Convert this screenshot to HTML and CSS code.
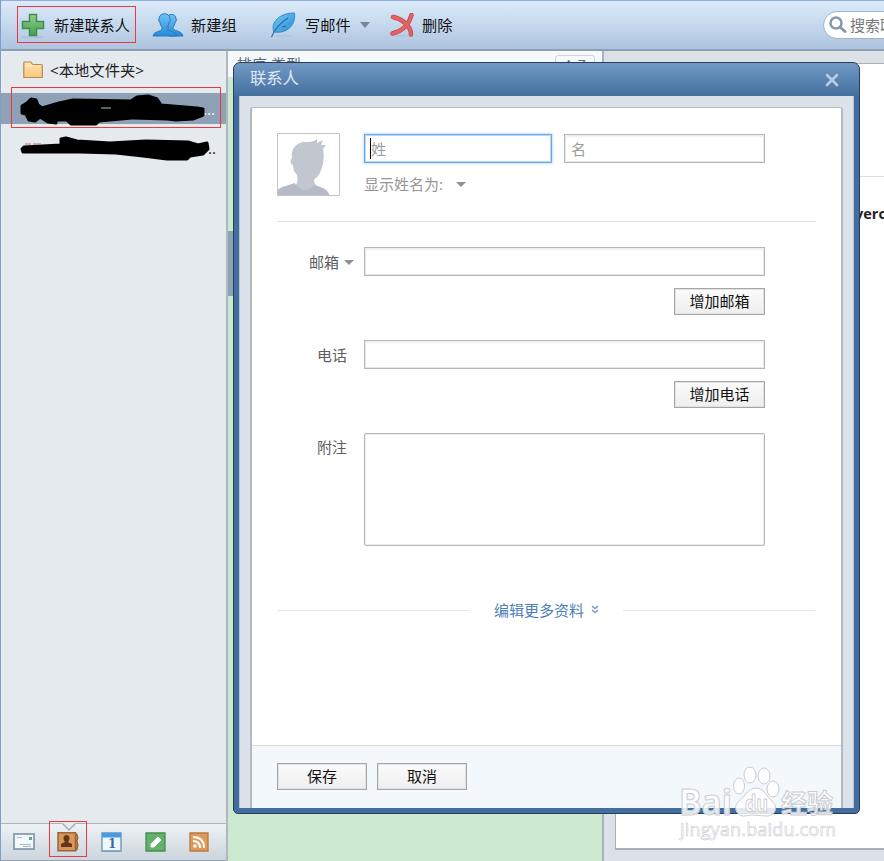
FILE: index.html
```html
<!DOCTYPE html>
<html lang="zh-CN">
<head>
    <meta charset="UTF-8">
    <title>联系人</title>
    <link rel="stylesheet" href="styles.css">
</head>
<body>
    <div class="app">
        <header class="toolbar">
            <div class="tool tool-new">
                <svg class="tool-icon" width="24" height="25" viewBox="0 0 24 25">
                    <defs>
                        <linearGradient id="plus" x1="0" y1="0" x2="0" y2="1"><stop offset="0" stop-color="#8fd08c"/><stop offset="1" stop-color="#43a04c"/></linearGradient>
                    </defs>
                    <path d="M1 24h21" stroke="#9db8d2"/>
                    <path d="M8.500 1.500h7v7h7v7h-7v7h-7v-7h-7v-7h7z" fill="url(#plus)" stroke="#438c4b" stroke-width="1.500"/>
                </svg>
                <span>新建联系人</span>
            </div>
            <div class="tool tool-group">
                <svg class="tool-icon" width="32" height="24" viewBox="0 0 32 24">
                    <defs>
                        <linearGradient id="people" x1="0" y1="0" x2="0" y2="1"><stop offset="0" stop-color="#70c2f2"/><stop offset="1" stop-color="#228ddb"/></linearGradient>
                    </defs>
                    <path d="M15 5c1-5 9-5 9 1 1 1 0 3-1 3 0 2-1 4-2 5v2c2 2 9 2 10 7h-14z" fill="url(#people)" stroke="#2b79b9"/>
                    <path d="M7 6c0-7 11-7 11 0 1 1 0 3-1 3 0 3-2 4-2 5v2c2 3 9 2 10 7H1c1-5 8-4 9-7v-2c-1-1-2-2-2-5-1 0-2-2-1-3z" fill="url(#people)" stroke="#2b79b9"/>
                </svg>
                <span>新建组</span>
            </div>
            <div class="tool tool-mail">
                <svg class="tool-icon" width="26" height="26" viewBox="0 0 26 26">
                    <defs>
                        <linearGradient id="feather" x1="0" y1="0" x2="1" y2="1"><stop offset="0" stop-color="#78cbf5"/><stop offset="1" stop-color="#248bd3"/></linearGradient>
                    </defs>
                    <path d="M6 24h16" stroke="#a8bdd2"/>
                    <path d="M4 20C0 11 9 1 24.500 1 26 13 17 22 4 20z" fill="url(#feather)" stroke="#328cc8"/>
                    <path d="M1.500 25C4 18 11 10 18 6M16 14l-4 1" fill="none" stroke="#28679d" stroke-width="1.100"/>
                </svg>
                <span>写邮件</span>
                <i class="arrow arrow-tool"></i>
            </div>
            <div class="tool tool-delete">
                <svg class="tool-icon" width="24" height="24" viewBox="0 0 24 24">
                    <path d="M5 23h17" stroke="#a8bdd2"/>
                    <path d="M3 4C10 5 21 12 21 21.500M21.500 2C19 11 13 18 2.500 20.500" fill="none" stroke="#b94a50" stroke-width="4.500" stroke-linecap="round"/>
                    <path d="M3 4C10 5 21 12 21 21.500M21.500 2C19 11 13 18 2.500 20.500" fill="none" stroke="#ea625d" stroke-width="3" stroke-linecap="round"/>
                </svg>
                <span>删除</span>
            </div>
            <div class="search">
                <svg width="18" height="18" viewBox="0 0 18 18">
                    <circle cx="7" cy="7" r="5.500" fill="none" stroke="#8499a9" stroke-width="2.500"/>
                    <path d="M11.500 11.500l4.500 4" stroke="#8499a9" stroke-width="3" stroke-linecap="round"/>
                </svg>
                <span>搜索联系人</span>
            </div>
        </header>

        <main class="content">
            <aside class="sidebar">
                <div class="folders">
                    <div class="folder">
                        <svg width="20" height="18" viewBox="0 0 20 18">
                            <defs>
                                <linearGradient id="folder" x1="0" y1="0" x2="0" y2="1"><stop offset="0" stop-color="#ffe3b0"/><stop offset="1" stop-color="#fbc77d"/></linearGradient>
                            </defs>
                            <path d="M.8 16.500V2q0-1 1-1h6l2 2.500h8.500q1 0 1 1v12z" fill="url(#folder)" stroke="#b58a50" stroke-width="1.200"/>
                            <path d="M2 5h7l1.500-1" fill="none" stroke="#fff0cf"/>
                        </svg>
                        <span>&lt;本地文件夹&gt;</span>
                    </div>
                    <div class="folder selected"><span>...</span></div>
                    <div class="folder account"><span>..</span></div>
                </div>
                <nav class="modules">
                    <svg width="22" height="20" viewBox="0 0 22 20">
                        <path d="M1 2h20v15H1z" fill="#f4f8fa" stroke="#728ba2" stroke-width="1.500"/>
                        <path d="M4 5.500h5M7 12.500h11M10 14.500h8" stroke="#a5bac9"/>
                        <path d="M16 5h3v3h-3z" fill="#5aae88"/>
                    </svg>
                    <svg width="22" height="20" viewBox="0 0 22 20">
                        <path d="M18 2h2l1 4-1 3 1 4-1 5h-2z" fill="#bd7845" stroke="#94592f"/>
                        <path d="M1 .8h17.500v18H1z" fill="#d99757" stroke="#9b6538" stroke-width="1.500"/>
                        <path d="M6.500 6c0-4 6-4 6 0 0 2-1 3-1.500 4l4 2v3H4v-3l4-2c-.5-1-1.500-2-1.500-4z" fill="#66351d"/>
                    </svg>
                    <svg width="22" height="20" viewBox="0 0 22 20">
                        <path d="M1 1h19v18H1z" fill="#eff8ff" stroke="#6591b7" stroke-width="1.300"/>
                        <path d="M1 1h19v4.500H1z" fill="#489ae8"/>
                        <text class="day" x="7" y="16">1</text>
                    </svg>
                    <svg width="22" height="20" viewBox="0 0 22 20">
                        <path d="M1 1h19v18H1z" fill="#63b16a" stroke="#498c51" stroke-width="1.300"/>
                        <path d="M6 15v-3l7-7 3 3-7 7z" fill="#fff" stroke="#fff" stroke-linejoin="round"/>
                    </svg>
                    <svg width="22" height="20" viewBox="0 0 22 20">
                        <path d="M1 1h18v18H1z" fill="#e29a5a" stroke="#b9793f" stroke-width="1.300"/>
                        <circle cx="6" cy="14" r="1.800" fill="#fff"/>
                        <path d="M4 9q7 0 7 7M4 5q11 0 11 11" fill="none" stroke="#fff" stroke-width="2"/>
                    </svg>
                    <svg class="notch" width="14" height="9" viewBox="0 0 14 9">
                        <path d="M0 0h14L7 7z" fill="#e5ebef"/>
                        <path d="M.5.5L7 7 13.500.5" fill="none" stroke="#a6b0b9" stroke-width="1.500"/>
                    </svg>
                </nav>
            </aside>
            <section class="list">
                <div class="list-header"><span>排序 类型 &nbsp;▴</span><span class="az">A-Z</span></div>
                <div class="list-selected"></div>
            </section>
            <section class="detail">
                <div class="card">
                    <div class="card-head"></div>
                    <div class="card-name">verc</div>
                </div>
            </section>
        </main>

        <div class="dialog">
            <div class="dialog-title">
                <span>联系人</span>
                <svg width="16" height="16" viewBox="0 0 16 16"><path d="M3 3l10 10M13 3L3 13" stroke="#b9cde4" stroke-width="2.600" stroke-linecap="round"/></svg>
            </div>
            <div class="dialog-body">
                <div class="panel">
                    <form class="form">
                        <div class="person">
                            <svg class="avatar" width="63" height="63" viewBox="0 0 63 63">
                                <path d="M17 53c4-2 4-5 3-11-3-3-4-6-4-10-3-1-3-5-1-7-2-9 5-16 13-16 5 0 8 0 12-3l0 4 6-3-2 5 5 0-3 4c2 9 0 20-5 27-2 3-4 2-4 5 0 2 2 4 3 5-5 10-16 9-23 0z" fill="#c2c6cf"/>
                                <path d="M.5 62.500V57c4-4 10-4 17-7 6 9 15 9 20 2 6 2 14 4 15 10.500z" fill="#b5bbc6"/>
                                <path d="M.5.5h62v62H.5z" fill="none" stroke="#c4c4c4"/>
                            </svg>
                            <div class="names">
                                <div class="name-inputs">
                                    <div class="input focused"><span class="caret"></span>姓</div>
                                    <div class="input last">名</div>
                                </div>
                                <div class="show-as">显示姓名为: <i class="arrow"></i></div>
                            </div>
                        </div>
                        <div class="row row-mail">
                            <label>邮箱 <i class="arrow"></i></label>
                            <div class="field">
                                <div class="input"></div>
                                <div class="button">增加邮箱</div>
                            </div>
                        </div>
                        <div class="row">
                            <label>电话</label>
                            <div class="field">
                                <div class="input"></div>
                                <div class="button">增加电话</div>
                            </div>
                        </div>
                        <div class="row">
                            <label>附注</label>
                            <div class="field"><div class="input note"></div></div>
                        </div>
                        <div class="more">
                            <span>编辑更多资料</span>
                            <svg width="8" height="10" viewBox="0 0 8 10"><path d="M1 1l3 2.500L7 1M1 5l3 2.500L7 5" fill="none" stroke="#6d98c9" stroke-width="1.400"/></svg>
                        </div>
                    </form>
                    <footer class="actions">
                        <div class="button">保存</div>
                        <div class="button">取消</div>
                    </footer>
                </div>
            </div>
        </div>

        <!-- marks drawn over the window -->
        <svg class="scribble" width="226" height="90" viewBox="0 80 226 90">
            <g stroke="#000" stroke-width="3" stroke-linejoin="round">
                <path d="M22 106l5-3 4-4 5 1 2 5 4 3 17-5 14-3 58 1 6-4 11-1 9 3 4 6 36 3 6 1v6l-10 4-17 1-9-1-34-1-1-0-33 3-3 3H71l-4-4-11 0 0 3-8-1-8-5-5 4-6-1-3-6-4-1z"/>
                <path d="M22 149l2-2 37-2v-6l5-1 11 3 33 2 36-2 42 1 10 3 9-2 1 6-5 5-13 2-3 3h-20l-24-3-27-3-36-1-25 0-32-0z"/>
            </g>
            <path d="M101 108l10 0" stroke="#b5c0cb"/>
            <path d="M25 144h6m2 0h8" stroke="#d9696b"/>
        </svg>
        <div class="mark mark-new"></div>
        <div class="mark mark-account"></div>
        <div class="mark mark-module"></div>

        <svg class="watermark" width="170" height="85" viewBox="0 0 170 85">
            <g class="wm-fill">
                <text class="wm-logo" x="8" y="50" textLength="53" lengthAdjust="spacingAndGlyphs">Bai</text>
                <ellipse cx="68" cy="21" rx="5.500" ry="8"/>
                <ellipse cx="79" cy="10" rx="6" ry="8"/>
                <ellipse cx="93" cy="11" rx="6" ry="8"/>
                <ellipse cx="102" cy="24" rx="6" ry="8"/>
                <path d="M85 23c8 0 10 8 16 13 7 6 3 15-5 15-7 0-15-2-22 0-8 1-13-9-6-15 6-4 9-13 17-13z"/>
                <text class="wm-du" x="74" y="47" textLength="23" lengthAdjust="spacingAndGlyphs">du</text>
                <text class="wm-cn" x="110" y="48">经验</text>
                <text class="wm-url" x="9" y="71" textLength="156">jingyan.baidu.com</text>
            </g>
        </svg>
    </div>
</body>
</html>
```
FILE: styles.css
```css
* {
    box-sizing: border-box;
}

body {
    margin: 0;
    font-family: "Open Sans", "Noto Sans CJK SC", sans-serif;
    font-size: 15px;
    line-height: 20px;
    color: #222;
}

.app {
    position: relative;
    width: 884px;
    height: 861px;
    overflow: hidden;
    display: flex;
    flex-direction: column;
    border-left: 1px solid #7f9fc9;
    background: #dbe1e7;
}

/* toolbar */
.toolbar {
    height: 51px;
    flex: none;
    display: flex;
    align-items: center;
    border-top: 1px solid #94b0d9;
    border-bottom: 2px solid #8d9eb3;
    background: linear-gradient(#dcebfa, #adc4df);
    color: #111;
}

.tool {
    flex: none;
    display: flex;
    align-items: center;
    white-space: nowrap;
}

.tool span {
    font-size: 15.2px;
}

.tool-new {
    margin-left: 20px;
    width: 131px;
    gap: 9px;
}

.tool-group {
    width: 118px;
    gap: 7px;
}

.tool-mail {
    width: 120px;
    gap: 9px;
}

.tool-delete {
    gap: 8px;
    width: 433px;
}

.tool-icon {
    flex: none;
}

.arrow {
    display: inline-block;
    flex: none;
    border: 5px solid transparent;
    border-top-color: #909090;
    border-bottom: 0;
}

.arrow-tool {
    border-top-width: 6px;
    border-top-color: #71879d;
}

.search {
    flex: none;
    display: flex;
    align-items: center;
    gap: 3px;
    width: 180px;
    height: 28px;
    padding-left: 5px;
    border: 1px solid #9fb4ca;
    border-radius: 14px;
    background: #fff;
    color: #777;
    white-space: nowrap;
}

.content {
    flex: 1;
    display: flex;
    min-height: 0;
}

/* sidebar */
.sidebar {
    width: 227px;
    flex: none;
    display: flex;
    flex-direction: column;
    border-right: 2px solid #b0b8bf;
    background: #e5eaee;
}

.folders {
    flex: 1;
    display: flex;
    flex-direction: column;
}

.folder {
    display: flex;
    align-items: center;
    gap: 7px;
    height: 42px;
    padding-left: 22px;
    padding-bottom: 4px;
    font-size: 15.3px;
}

.folder.selected {
    height: 31px;
    justify-content: flex-end;
    padding: 0 11px 0 0;
    background: #8fa2b5;
    color: #fff;
}

.folder.account {
    height: 48px;
    justify-content: flex-end;
    padding: 0 10px 0 0;
}

.modules {
    position: relative;
    height: 38px;
    display: flex;
    align-items: center;
    gap: 22px;
    padding-left: 12px;
    border-top: 1px solid #a9b3bb;
    border-bottom: 1px solid #8fa0ae;
    background: linear-gradient(#eef2f5, #cbd5dd);
}

.notch {
    position: absolute;
    left: 61px;
    top: -1px;
}

.day {
    font: bold 12px "DejaVu Serif", serif;
    fill: #376f9c;
}

/* contact list */
.list {
    width: 376px;
    flex: none;
    border-right: 2px solid #a9b3bc;
    background: #cce8cf;
}

.list-header {
    display: flex;
    justify-content: space-between;
    height: 27px;
    overflow: hidden;
    padding: 3px 7px 0 9px;
    background: #f6f9fc;
    border-bottom: 1px solid #d9dfe3;
    color: #5d6872;
}

.az {
    width: 40px;
    height: 26px;
    margin-top: 1px;
    border: 1px solid #cdd4da;
    border-radius: 3px;
    font-size: 14px;
    line-height: 17px;
    text-align: center;
}

.list-selected {
    margin-top: 153px;
    height: 65px;
    background: #8fa2b5;
}

.detail {
    flex: 1;
    padding: 12px 0 11px 11px;
}

.card {
    height: 787px;
    border: 1px solid #a8afb6;
    border-right: 0;
    border-bottom-width: 2px;
    background: #fff;
}

.card-head {
    height: 113px;
    border-bottom: 1px solid #dedede;
}

.card-name {
    padding: 27px 0 0 239px;
    white-space: nowrap;
    font-weight: bold;
    font-size: 14.5px;
}

/* dialog */
.dialog {
    position: absolute;
    left: 232px;
    top: 62px;
    width: 627px;
    height: 752px;
    display: flex;
    flex-direction: column;
    border: 1px solid #263f5b;
    border-radius: 7px 7px 5px 5px;
    background: #426e9f;
}

.dialog-title {
    display: flex;
    align-items: center;
    justify-content: space-between;
    height: 33px;
    flex: none;
    padding: 0 19px 0 16px;
    border-radius: 6px 6px 0 0;
    background: linear-gradient(#7099c5, #456f9f);
    color: #e1eaf3;
    font-size: 16.3px;
}

.dialog-title span {
    padding-bottom: 3px;
}

.dialog-body {
    flex: 1;
    margin: 0 5px 5px;
    padding: 11px 10px 0;
    border: 1px solid #b6c4d4;
    border-top: 0;
    border-bottom: 0;
    background: #dbe2ea;
}

.panel {
    display: flex;
    flex-direction: column;
    height: 701px;
    border: 2px solid #b4bac0;
    border-top-width: 1px;
    border-bottom: 0;
    border-radius: 3px 3px 0 0;
    background: #fff;
}

.form {
    flex: 1;
    padding: 25px 25px 0;
}

.person {
    display: flex;
    height: 89px;
    gap: 24px;
    border-bottom: 1px solid #dfdfdf;
}

.avatar {
    flex: none;
}

.names {
    flex: 1;
    padding-top: 1px;
    color: #969696;
}

.name-inputs {
    display: flex;
    gap: 12px;
}

.input {
    display: flex;
    align-items: center;
    width: 401px;
    height: 29px;
    padding: 0 6px;
    border: 1px solid #b6b6b6;
    box-shadow: inset 0 2px 2px #f0f0f0, inset 0 0 0 1px #e6e6e6;
    background: #fff;
    color: #9b9b9b;
}

.input.last {
    width: 201px;
}

.input.focused {
    width: 188px;
    padding-left: 5px;
    border-color: #6ca9e4;
    box-shadow: 0 0 2px 1px #cae2f8, inset 0 0 0 1px #b8d8f6;
}

.caret {
    width: 1px;
    height: 21px;
    background: #000;
}

.show-as {
    display: flex;
    align-items: center;
    gap: 13px;
    margin-top: 11px;
}

.row {
    display: flex;
    height: 93px;
}

.row-mail {
    margin-top: 25px;
}

.row label {
    display: flex;
    align-items: center;
    justify-content: flex-end;
    gap: 5px;
    width: 87px;
    height: 30px;
    padding-right: 17px;
    color: #5d5d5d;
}

.row-mail label {
    padding-right: 10px;
}

.row:nth-of-type(4) label {
    height: 27px;
}

.field {
    display: flex;
    flex-direction: column;
    align-items: flex-end;
    gap: 12px;
}

.input.note {
    flex: none;
    height: 113px;
    border-radius: 2px;
    box-shadow: inset 0 0 0 1px #eee;
}

.button {
    display: flex;
    align-items: center;
    justify-content: center;
    width: 91px;
    height: 27px;
    padding-bottom: 2px;
    border: 1px solid #a5a5a5;
    box-shadow: inset 0 0 0 1px #e2e2e2;
    background: linear-gradient(#fbfbfb, #eee);
    color: #111;
}

.more {
    display: flex;
    align-items: center;
    gap: 7px;
    margin-top: 74px;
    color: #4c7eb8;
    white-space: nowrap;
}

.more::before,
.more::after {
    content: "";
    flex: none;
    height: 1px;
    background: #e4e4e4;
    width: 192px;
}

.more::before {
    margin-right: 18px;
}

.more::after {
    margin-left: 17px;
}

.actions {
    display: flex;
    gap: 10px;
    height: 63px;
    padding: 17px 25px 0;
    border-top: 1px solid #d4d9dd;
    background: #f3f8fd;
}

.actions .button {
    width: 90px;
}

/* overlays */
.scribble {
    position: absolute;
    left: -1px;
    top: 80px;
}

.mark {
    position: absolute;
    border: 1px solid #f0383c;
}

.mark-new {
    left: 16px;
    top: 6px;
    width: 119px;
    height: 37px;
}

.mark-account {
    left: 10px;
    top: 87px;
    width: 210px;
    height: 41px;
}

.mark-module {
    left: 48px;
    top: 821px;
    width: 38px;
    height: 36px;
}

.watermark {
    position: absolute;
    left: 670px;
    top: 765px;
}

.wm-fill {
    fill: #fff;
    fill-opacity: .85;
    stroke: #c9cdd2;
    stroke-width: 1px;
}

.wm-logo {
    font: bold 35px "Open Sans", sans-serif;
}

.wm-du {
    font: bold 23px "Open Sans", sans-serif;
}

.wm-cn {
    font: bold 26px "Noto Sans CJK SC", sans-serif;
}

.wm-url {
    font: 18px "Open Sans", sans-serif;
    stroke-width: .6px;
}
```
